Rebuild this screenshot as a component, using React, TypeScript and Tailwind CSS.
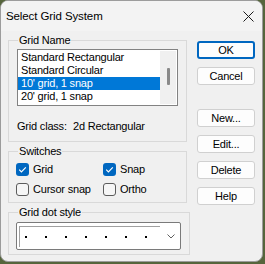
import React from "react";

const items = [
  "Standard Rectangular",
  "Standard Circular",
  "10' grid, 1 snap",
  "20' grid, 1 snap",
];

const buttons = [
  { label: "OK", gap: "mt-0", primary: true },
  { label: "Cancel", gap: "mt-[8px]" },
  { label: "New...", gap: "mt-[24px]" },
  { label: "Edit...", gap: "mt-[8px]" },
  { label: "Delete", gap: "mt-[8px]" },
  { label: "Help", gap: "mt-[8px]" },
];

const Check = ({ label, checked }: { label: string; checked?: boolean }) => (
  <label className="flex items-center h-[13px] gap-[4px]">
    {checked ? (
      <span className="w-[13px] h-[13px] rounded-[3px] bg-[#0067c0] flex items-center justify-center">
        <svg width="13" height="13" viewBox="0 0 13 13">
          <path d="M3.2 6.6 L5.4 8.8 L9.8 4.3" fill="none" stroke="#fff" strokeWidth="1.2" />
        </svg>
      </span>
    ) : (
      <span className="w-[13px] h-[13px] rounded-[3px] border border-[#5c5c5c] bg-[#f6f6f6]" />
    )}
    <span>{label}</span>
  </label>
);

const Group = ({ title, className, children }: { title: string; className?: string; children: React.ReactNode }) => (
  <fieldset className={`border border-[#d9d9d9] px-[8px] ${className ?? ""}`}>
    <legend className="ml-[1px] px-[1px] leading-[13px]">{title}</legend>
    {children}
  </fieldset>
);

export default function App() {
  return (
    <div className="w-[265px] h-[264px] bg-[#56653c] font-['Liberation_Sans',Arial,sans-serif] text-[11px] tracking-[-0.2px] text-black leading-[13px]">
      <div className="w-[263px] h-[262px] rounded-[8px] border border-[#9c9c9c] bg-[#f0f0f0] overflow-hidden flex flex-col">
        {/* title bar */}
        <div className="h-[30px] bg-[#f3f3f3] flex items-center justify-between pl-[5px] pr-[8px]">
          <span className="text-[11.5px] tracking-[-0.1px]">Select Grid System</span>
          <svg width="11" height="11" viewBox="0 0 11 11">
            <path d="M0.5 0.5 L10.5 10.5 M10.5 0.5 L0.5 10.5" stroke="#1b1b1b" strokeWidth="1" />
          </svg>
        </div>

        <div className="flex pl-[7px] pt-[3px] gap-[10px]">
          {/* left column */}
          <div className="w-[179px] flex flex-col">
            <Group title="Grid Name" className="pb-[8px]">
              <div className="mt-[2px] h-[57px] border border-[#828282] bg-white flex">
                <ul className="flex-1 pt-[1px]">
                  {items.map((it, i) => (
                    <li
                      key={it}
                      className={`h-[13px] pl-[3px] ${i === 2 ? "bg-[#0078d7] text-white" : ""}`}
                    >
                      {it}
                    </li>
                  ))}
                </ul>
                <div className="w-[16px] bg-[#f0f0f0] flex justify-center mr-[1px] my-[1px]">
                  <div className="w-[3px] h-[17px] mt-[17px] ml-[1px] bg-[#8a8a8a] rounded-[1px]" />
                </div>
              </div>
              <div className="mt-[14px] flex">
                <span className="w-[56px]">Grid class:</span>
                <span>2d Rectangular</span>
              </div>
            </Group>

            <Group title="Switches" className="mt-[3px] pb-[6px]">
              <div className="mt-[5px] grid grid-cols-[87px_1fr] gap-y-[7px] -ml-[1px]">
                <Check label="Grid" checked />
                <Check label="Snap" checked />
                <Check label="Cursor snap" />
                <Check label="Ortho" />
              </div>
            </Group>

            <Group title="Grid dot style" className="mt-[3px] pb-[4px]">
              <div className="mt-[3px] -ml-[1px] h-[28px] w-[165px] border border-[#7a7a7a] rounded-[2px] bg-white flex items-center pl-[2px] pr-[5px]">
                <div className="w-[141px] h-[21px] border-t border-l border-[#a0a0a0] flex items-center gap-[18px] pl-[5px]">
                  {[0, 1, 2, 3, 4, 5, 6].map((d) => (
                    <span key={d} className="w-[2px] h-[2px] bg-black" />
                  ))}
                </div>
                <svg className="ml-auto" width="8" height="5" viewBox="0 0 8 5">
                  <path d="M0.5 0.5 L4 4 L7.5 0.5" fill="none" stroke="#606060" strokeWidth="1" />
                </svg>
              </div>
            </Group>
          </div>

          {/* buttons */}
          <div className="w-[58px] flex flex-col pt-[7px]">
            {buttons.map((b) => (
              <button
                key={b.label}
                className={`${b.gap} h-[18px] rounded-[3px] bg-[#fdfdfd] flex items-center justify-center ${
                  b.primary ? "border-2 border-[#0067c0]" : "border border-[#d0d0d0]"
                }`}
              >
                {b.label}
              </button>
            ))}
          </div>
        </div>
      </div>
    </div>
  );
}
